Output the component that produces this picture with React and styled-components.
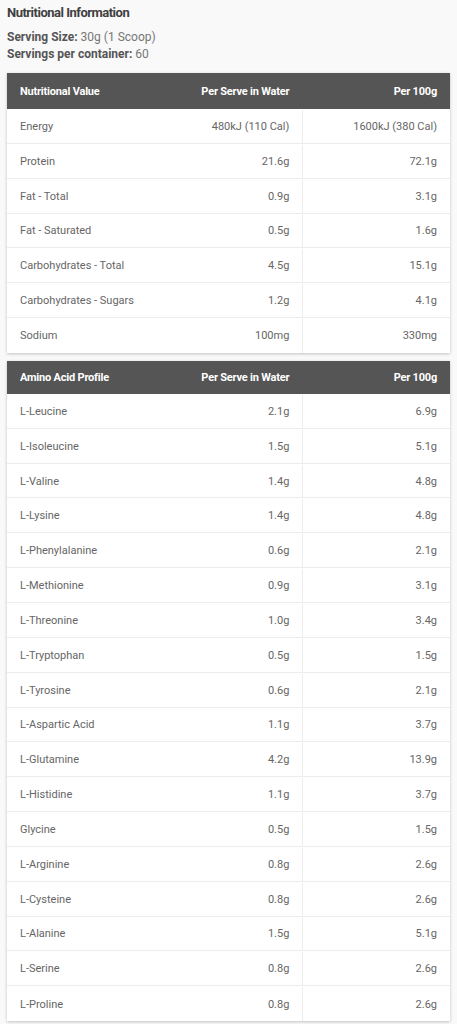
import styled, { createGlobalStyle } from 'styled-components';

const GlobalStyle = createGlobalStyle`
	body {
		margin: 0;
		background: #f9f9f9;
		font-family: Roboto, 'Liberation Sans', sans-serif;
	}
`;

const Page = styled.div`
	padding: 4px 7px 5px;
	color: #666;
`;

const Title = styled.h2`
	margin: 0;
	font-size: 13px;
	font-weight: 700;
	color: #3f3f3f;
	letter-spacing: -0.5px;
	line-height: 17px;
`;

const Meta = styled.div`
	margin-top: 8px;
	font-size: 12px;
	line-height: 17px;
	color: #777;

	b {
		color: #555;
		font-weight: 700;
	}
`;

const Table = styled.div`
	margin-top: ${(p) => p.$top}px;
	background: #fff;
	box-shadow: 0 1px 3px rgba(0, 0, 0, 0.22);
	font-size: 11px;
`;

const Row = styled.div`
	display: grid;
	grid-template-columns: 1fr 1fr 1fr;
	height: 34.85px;
	box-sizing: border-box;
	border-bottom: 1px solid #ececec;
	padding-top: 1px;

	&:last-child {
		border-bottom: none;
	}
`;

const HeadRow = styled(Row)`
	height: ${(p) => p.$h}px;
	background: #555;
	color: #fff;
	font-weight: 700;
	border-bottom: none;
	padding-top: 0;
	letter-spacing: -0.2px;
`;

const Cell = styled.div`
	display: flex;
	align-items: center;
	justify-content: ${(p) => (p.$right ? 'flex-end' : 'flex-start')};
	padding: 0 13px;
	white-space: nowrap;

	&:nth-child(3) {
		border-left: 1px solid #ececec;
	}
`;

const HeadCell = styled(Cell)`
	&:nth-child(3) {
		border-left: none;
	}
`;

const nutrition = [
	['Energy', '480kJ (110 Cal)', '1600kJ (380 Cal)'],
	['Protein', '21.6g', '72.1g'],
	['Fat - Total', '0.9g', '3.1g'],
	['Fat - Saturated', '0.5g', '1.6g'],
	['Carbohydrates - Total', '4.5g', '15.1g'],
	['Carbohydrates - Sugars', '1.2g', '4.1g'],
	['Sodium', '100mg', '330mg'],
];

const amino = [
	['L-Leucine', '2.1g', '6.9g'],
	['L-Isoleucine', '1.5g', '5.1g'],
	['L-Valine', '1.4g', '4.8g'],
	['L-Lysine', '1.4g', '4.8g'],
	['L-Phenylalanine', '0.6g', '2.1g'],
	['L-Methionine', '0.9g', '3.1g'],
	['L-Threonine', '1.0g', '3.4g'],
	['L-Tryptophan', '0.5g', '1.5g'],
	['L-Tyrosine', '0.6g', '2.1g'],
	['L-Aspartic Acid', '1.1g', '3.7g'],
	['L-Glutamine', '4.2g', '13.9g'],
	['L-Histidine', '1.1g', '3.7g'],
	['Glycine', '0.5g', '1.5g'],
	['L-Arginine', '0.8g', '2.6g'],
	['L-Cysteine', '0.8g', '2.6g'],
	['L-Alanine', '1.5g', '5.1g'],
	['L-Serine', '0.8g', '2.6g'],
	['L-Proline', '0.8g', '2.6g'],
];

const DataTable = ({ title, rows, top, headHeight }) => (
	<Table $top={top}>
		<HeadRow $h={headHeight}>
			<HeadCell>{title}</HeadCell>
			<HeadCell $right>Per Serve in Water</HeadCell>
			<HeadCell $right>Per 100g</HeadCell>
		</HeadRow>
		{rows.map(([name, serve, per100]) => (
			<Row key={name}>
				<Cell>{name}</Cell>
				<Cell $right>{serve}</Cell>
				<Cell $right>{per100}</Cell>
			</Row>
		))}
	</Table>
);

const App = () => {
	return (
		<>
			<GlobalStyle />
			<Page>
				<Title>Nutritional Information</Title>
				<Meta>
					<div>
						<b>Serving Size:</b> 30g (1 Scoop)
					</div>
					<div>
						<b>Servings per container:</b> 60
					</div>
				</Meta>
				<DataTable title="Nutritional Value" rows={nutrition} top={10} headHeight={36} />
				<DataTable title="Amino Acid Profile" rows={amino} top={8} headHeight={33} />
			</Page>
		</>
	);
};

export default App;
